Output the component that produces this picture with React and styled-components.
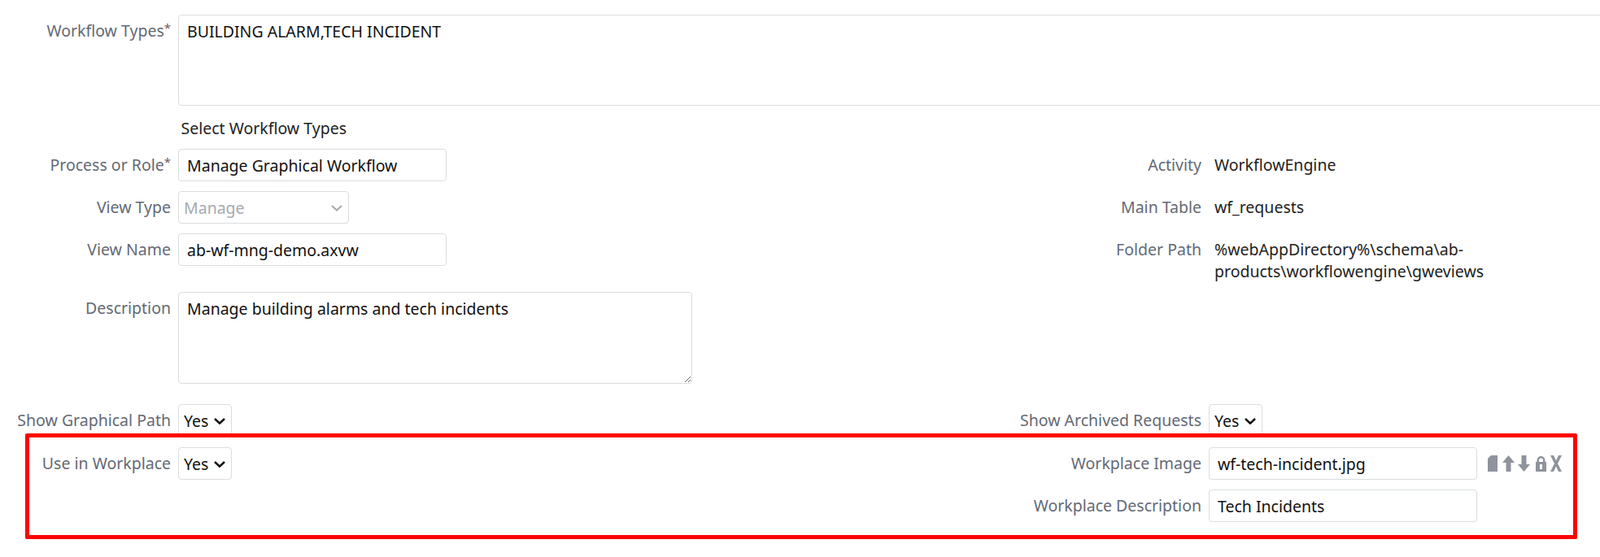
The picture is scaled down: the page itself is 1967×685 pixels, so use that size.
import React from "react";
import styled, { createGlobalStyle } from "styled-components";

const chevron = (color, w) =>
  `url("data:image/svg+xml,%3Csvg xmlns='http://www.w3.org/2000/svg' width='14' height='8' viewBox='0 0 14 8'%3E%3Cpath d='M1 1l6 5.6L13 1' fill='none' stroke='${color}' stroke-width='${w}'/%3E%3C/svg%3E")`;

const Global = createGlobalStyle`
  html, body { margin: 0; padding: 0; background: #fff; overflow: hidden; }
  body { font-family: "Noto Sans", sans-serif; font-size: 19.5px; line-height: 27px; color: #111; }
`;

const Form = styled.form`
  width: 1967px;
  height: 685px;
  padding-top: 18px;
  box-sizing: border-box;
  overflow: hidden;
`;

const Row = styled.div`
  display: flex;
  margin-top: ${(p) => p.$top || 0}px;
`;

const Field = styled.div`
  display: flex;
  align-items: flex-start;
  width: ${(p) => (p.$grow ? "auto" : "1267px")};
  flex: ${(p) => (p.$grow ? "1" : "none")};
  gap: 9px;
`;

const Label = styled.label`
  display: flex;
  justify-content: flex-end;
  width: 210px;
  flex: none;
  color: #646975;
  padding-top: 6px;
  line-height: 27px;
  white-space: nowrap;
`;

const Required = styled.span`
  font-size: 15px;
  line-height: 20px;
  color: #7a5a58;
`;

const Control = `
  box-sizing: border-box;
  font: inherit;
  color: #111;
  background-color: #fff;
  border: 1px solid #d9dee1;
  border-radius: 4px;
  outline: none;
  margin: 0;
`;

const TextInput = styled.input`
  ${Control}
  height: 39.5px;
  width: ${(p) => p.$w || 330}px;
  padding: 2px 10px 0;
`;

const TextArea = styled.textarea`
  ${Control}
  display: block;
  height: ${(p) => p.$h}px;
  width: ${(p) => p.$w}px;
  padding: 6px 10px;
  line-height: 27px;
  resize: ${(p) => p.$resize || "none"};
`;

const Select = styled.select`
  ${Control}
  appearance: none;
  height: 39.5px;
  width: ${(p) => p.$w || 66}px;
  padding: 1px 0 0 6px;
  background-image: ${chevron("%23111", 2.6)};
  background-repeat: no-repeat;
  background-position: right 7px top 16px;
  &:disabled {
    color: #a6aab1;
    opacity: 1;
    background-image: ${chevron("%23a5a8af", 2)};
  }
`;

const Hint = styled.div`
  margin: 14px 0 12px 222.5px;
  line-height: 27px;
  color: #222;
`;

const Value = styled.div`
  width: 330px;
  padding: 6px 0 0 7px;
  box-sizing: border-box;
  line-height: 27px;
  color: #222;
`;

const Columns = styled.div`
  display: grid;
  grid-template-columns: 1267px 1fr;
  row-gap: 12.5px;
`;

const Workplace = styled.div`
  position: relative;
  margin-top: 13.5px;
  display: flex;
  flex-direction: column;
  gap: 12.5px;
`;

const Highlight = styled.div`
  position: absolute;
  left: 31px;
  top: -17px;
  width: 1908px;
  height: 130px;
  box-sizing: border-box;
  border: 5px solid #fe0000;
  border-radius: 2px;
  pointer-events: none;
`;

const Tools = styled.div`
  display: flex;
  align-items: center;
  height: 39px;
  margin-left: -0.5px;
  color: #8f939d;
`;

const Icon = styled.svg`
  display: block;
  fill: currentColor;
  height: 20px;
  width: ${(p) => p.$w}px;
  margin-left: ${(p) => p.$gap}px;
`;

export default function App() {
  return (
    <>
      <Global />
      <Form onSubmit={(e) => e.preventDefault()}>
        <Row>
          <Field $grow>
            <Label>
              Workflow Types<Required>*</Required>
            </Label>
            <TextArea $w={1800} $h={112} readOnly value="BUILDING ALARM,TECH INCIDENT" />
          </Field>
        </Row>
        <Hint>Select Workflow Types</Hint>
        <Columns>
          <Field>
            <Label>
              Process or Role<Required>*</Required>
            </Label>
            <TextInput readOnly value="Manage Graphical Workflow" />
          </Field>
          <Field>
            <Label>Activity</Label>
            <Value>WorkflowEngine</Value>
          </Field>
          <Field>
            <Label>View Type</Label>
            <Select $w={209.5} disabled defaultValue="Manage">
              <option>Manage</option>
            </Select>
          </Field>
          <Field>
            <Label>Main Table</Label>
            <Value>wf_requests</Value>
          </Field>
          <Field>
            <Label>View Name</Label>
            <TextInput readOnly value="ab-wf-mng-demo.axvw" />
          </Field>
          <Field>
            <Label>Folder Path</Label>
            <Value>%webAppDirectory%\schema\ab-products\workflowengine\gweviews</Value>
          </Field>
        </Columns>
        <Row $top={12}>
          <Field>
            <Label>Description</Label>
            <TextArea $w={632} $h={112.5} $resize="both" readOnly value="Manage building alarms and tech incidents" />
          </Field>
        </Row>
        <Row $top={25.5}>
          <Field>
            <Label>Show Graphical Path</Label>
            <Select defaultValue="Yes">
              <option>Yes</option>
              <option>No</option>
            </Select>
          </Field>
          <Field>
            <Label>Show Archived Requests</Label>
            <Select defaultValue="Yes">
              <option>Yes</option>
              <option>No</option>
            </Select>
          </Field>
        </Row>
        <Workplace>
          <Row>
            <Field>
              <Label>Use in Workplace</Label>
              <Select defaultValue="Yes">
                <option>Yes</option>
                <option>No</option>
              </Select>
            </Field>
            <Field $grow>
              <Label>Workplace Image</Label>
              <TextInput readOnly value="wf-tech-incident.jpg" />
              <Tools>
                <Icon $w={12} $gap={4} viewBox="0 0 12 20">
                  <path d="M4 0h8v20H0V4z" />
                </Icon>
                <Icon $w={15} $gap={6} viewBox="0 0 15 20">
                  <path d="M7.5 0 15 9h-4.5v11h-6V9H0z" />
                </Icon>
                <Icon $w={15} $gap={4} viewBox="0 0 15 20">
                  <path d="M7.5 20 0 11h4.5V0h6v11H15z" />
                </Icon>
                <Icon $w={13} $gap={7} viewBox="0 0 13 20">
                  <path
                    fillRule="evenodd"
                    d="M1.5 8V6a5 5 0 0 1 10 0v2H13v12H0V8zm2.5 0h5V6a2.5 2.5 0 0 0-5 0zM5 11v6h3v-6z"
                  />
                </Icon>
                <Icon $w={14} $gap={5} viewBox="0 0 14 20">
                  <path d="M0 0h4l3 6.5L10 0h4L9 10l5 10h-4l-3-6.5L4 20H0l5-10z" />
                </Icon>
              </Tools>
            </Field>
          </Row>
          <Row>
            <Field />
            <Field>
              <Label>Workplace Description</Label>
              <TextInput readOnly value="Tech Incidents" />
            </Field>
          </Row>
          <Highlight />
        </Workplace>
      </Form>
    </>
  );
}
